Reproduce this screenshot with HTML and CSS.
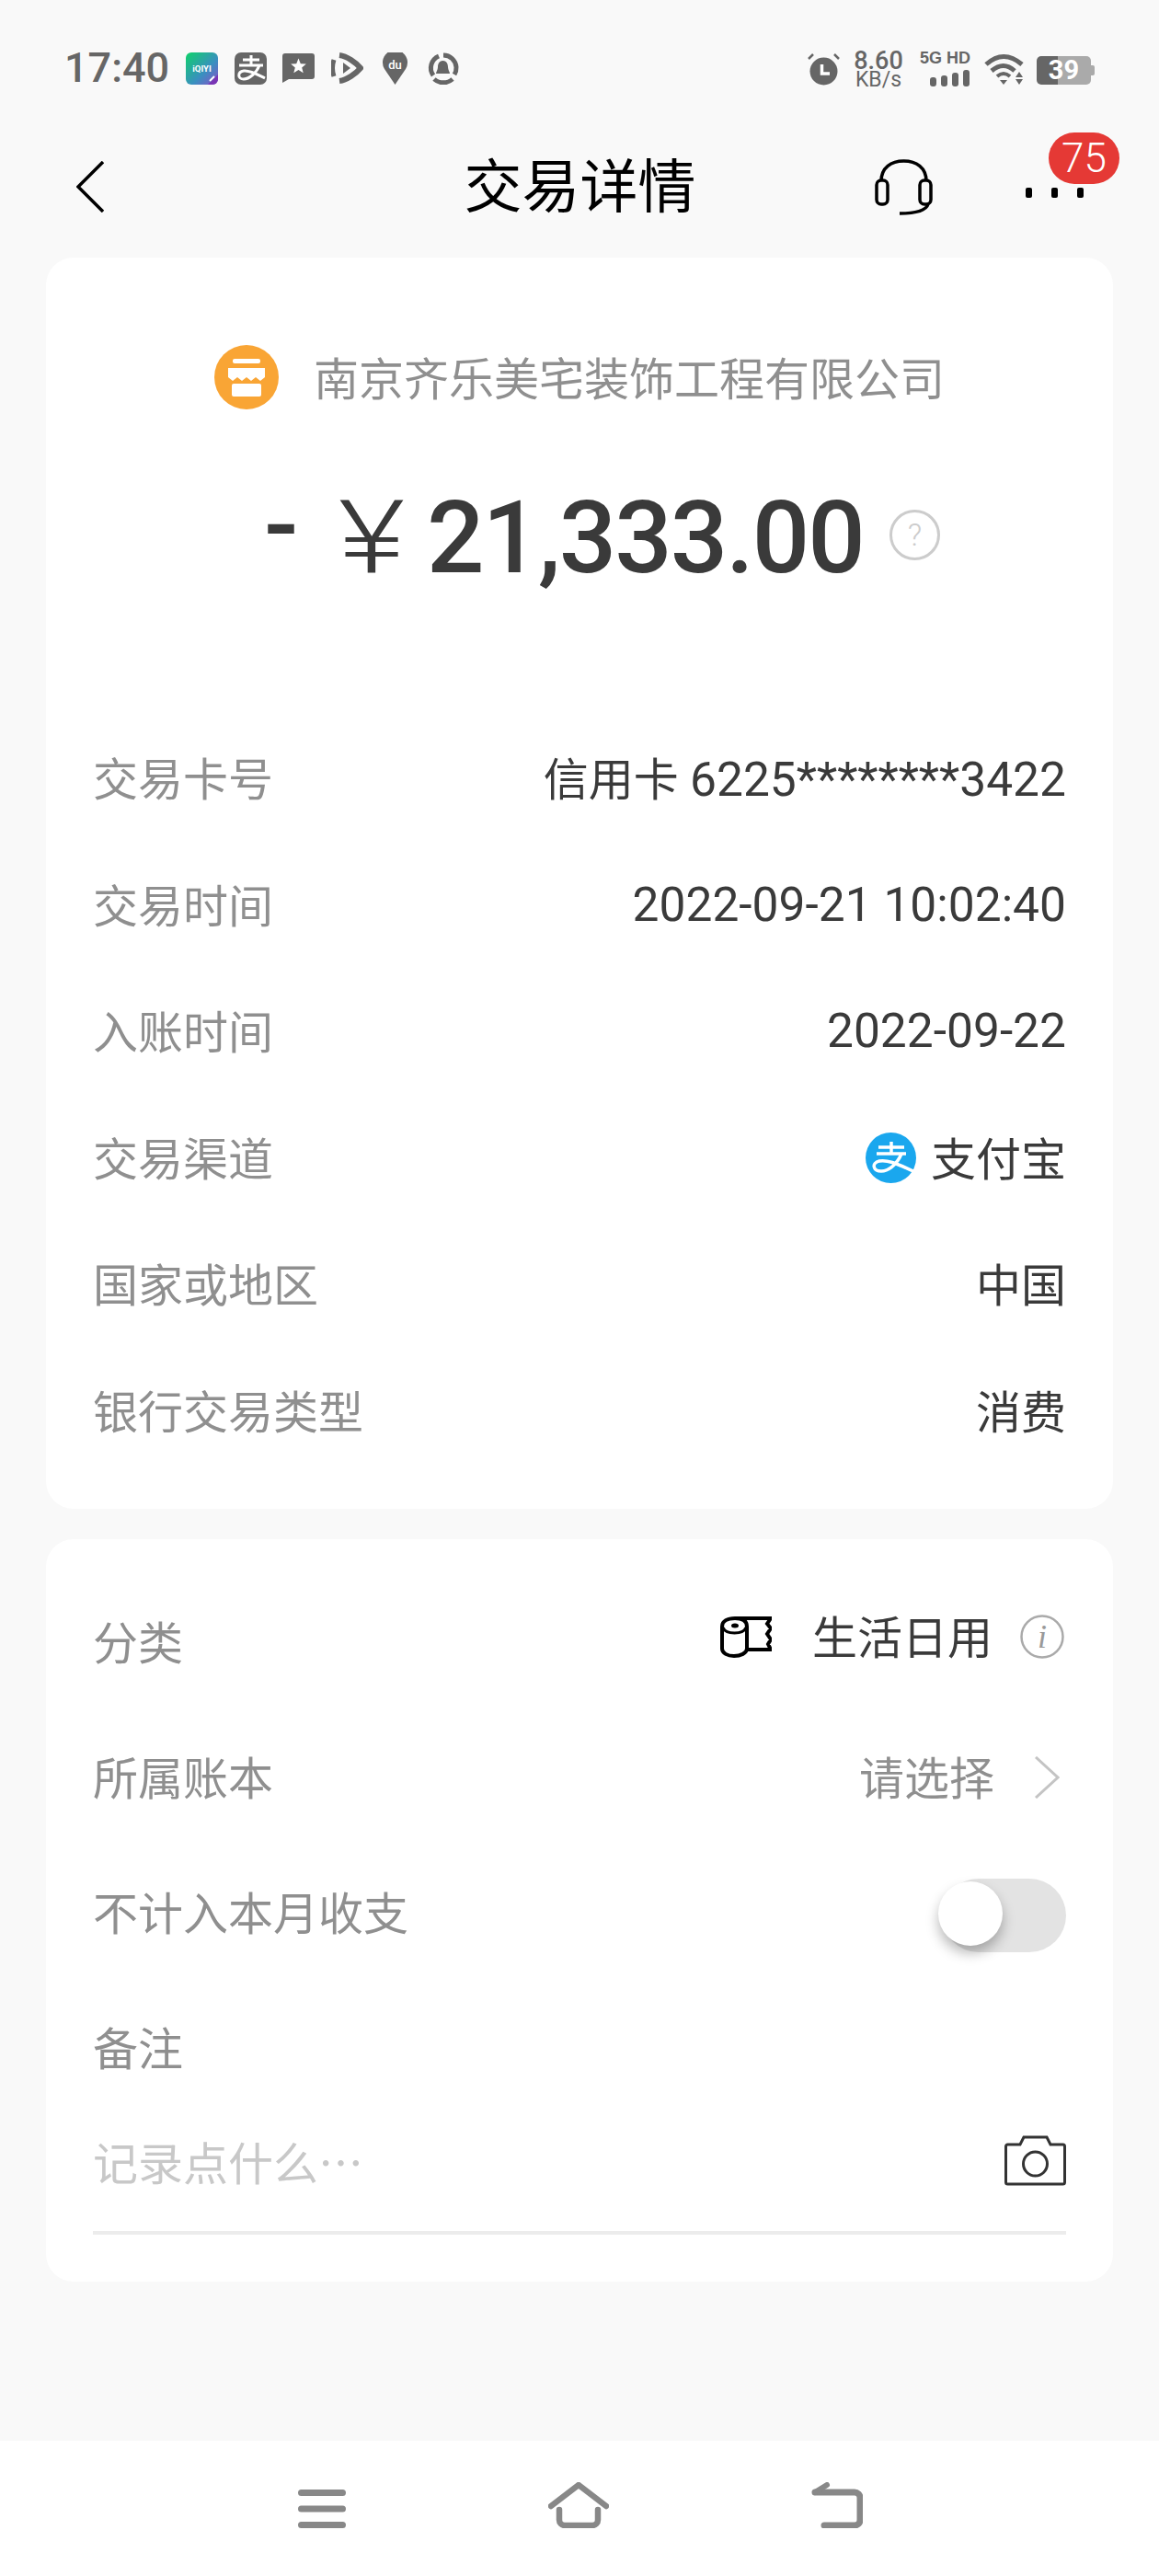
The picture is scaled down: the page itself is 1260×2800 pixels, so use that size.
FILE: index.html
```html
<!DOCTYPE html>
<html lang="zh-CN">
<head>
    <meta charset="UTF-8">
    <meta name="viewport" content="width=device-width, initial-scale=1.0">
    <title>交易详情</title>
    <link rel="stylesheet" href="styles.css">
</head>
<body>
    <!-- Status bar -->
    <div class="status-bar">
        <div class="status-left">
            <span class="clock">17:40</span>
            <svg class="status-icon" viewBox="0 0 35 35">
                <defs>
                    <linearGradient id="iqiyiFill" x1="0" y1="0" x2="1" y2="1">
                        <stop offset="0" stop-color="#0fd26a"/>
                        <stop offset="0.6" stop-color="#3a8fc0"/>
                        <stop offset="1" stop-color="#8a4fc8"/>
                    </linearGradient>
                </defs>
                <rect width="35" height="35" rx="6" fill="url(#iqiyiFill)"/>
                <text x="17.5" y="21" text-anchor="middle" class="iqiyi-text">iQIYI</text>
                <path d="M24 35 L35 24 V29 a6 6 0 0 1 -6 6z" fill="#7a35b5"/>
                <path d="M26 31 L31 26" stroke="#fff" stroke-width="2"/>
            </svg>
            <svg class="status-icon" viewBox="0 0 35 35">
                <rect width="35" height="35" rx="7" fill="#666"/>
                <path d="M9 8 H27 M18 3 V14 M5 14 H31" stroke="#fff" stroke-width="3" fill="none"/>
                <path d="M27 14 C24 22 16 29 10 29 C3 29 3 21 10 20 C17 19 25 24 33 28" stroke="#fff" stroke-width="3" fill="none"/>
            </svg>
            <svg class="status-icon" viewBox="0 0 35 35">
                <path d="M3 1 H32 a3 3 0 0 1 3 3 V26 a3 3 0 0 1 -3 3 H7 L0 33 V4 a3 3 0 0 1 3 -3z" fill="#666"/>
                <polygon points="17.5,6.5 19.8,12.2 25.8,12.6 21.2,16.4 22.7,22.3 17.5,19 12.3,22.3 13.8,16.4 9.2,12.6 15.2,12.2" fill="#fff"/>
            </svg>
            <svg class="status-icon" viewBox="0 0 35 35">
                <path d="M9 3 C17 4 27 11 32 17 C27 23 17 30 9 31" stroke="#666" stroke-width="6" fill="none"/>
                <path d="M3 8 C1 14 1 20 3 26" stroke="#666" stroke-width="5" fill="none"/>
                <polygon points="13,11 21,17 13,23" fill="#666"/>
            </svg>
            <svg class="status-icon" viewBox="0 0 35 35">
                <path d="M17.5 35 L6 18 A13.5 13.5 0 1 1 29 18z" fill="#666"/>
                <text x="17.5" y="18" text-anchor="middle" class="du-text">du</text>
            </svg>
            <svg class="status-icon" viewBox="0 0 35 35">
                <path d="M7 25 A14 14 0 0 1 13 4" stroke="#666" stroke-width="5" fill="none"/>
                <path d="M18 3 A14 14 0 0 1 32 16 A14 14 0 0 1 30 24" stroke="#666" stroke-width="5" fill="none"/>
                <path d="M8 29 A15 15 0 0 0 28 29" stroke="#666" stroke-width="5" fill="none"/>
                <path d="M17.5 9 C13 9 12 13 12 16 C12 19 10 21 10 23 H25 C25 21 23 19 23 16 C23 13 22 9 17.5 9z" fill="#666"/>
            </svg>
        </div>
        <div class="status-right">
            <svg class="alarm" viewBox="0 0 35 35">
                <circle cx="17.5" cy="19.5" r="15" fill="#666"/>
                <path d="M15.5 12 V22 H24" stroke="#fff" stroke-width="3.5" fill="none"/>
                <path d="M1 6 L6 1 M29 1 L34 6" stroke="#666" stroke-width="2.5"/>
            </svg>
            <div class="speed"><span>8.60</span><span class="speed-unit">KB/s</span></div>
            <div class="network">
                <span class="network-label">5G HD</span>
                <div class="signal">
                    <i class="bar bar-1"></i><i class="bar bar-2"></i><i class="bar bar-3"></i><i class="bar bar-4"></i>
                </div>
            </div>
            <svg class="wifi" viewBox="0 0 43 34">
                <path d="M2 12 Q21 -5 41 12" stroke="#666" stroke-width="5" fill="none"/>
                <path d="M8 19 Q21 8 33 19" stroke="#666" stroke-width="5" fill="none"/>
                <path d="M14 25 Q21 19 28 25" stroke="#666" stroke-width="4" fill="none"/>
                <polygon points="17,29 25,29 21,34" fill="#666"/>
                <polygon points="38,20 42,26 34,26" fill="#666"/>
                <polygon points="34,28 42,28 38,34" fill="#666"/>
            </svg>
            <div class="battery">39</div>
        </div>
    </div>

    <!-- Title bar -->
    <header class="top-bar">
        <svg class="back-icon" viewBox="0 0 30 56">
            <path d="M29 1 L2 28 L29 55" stroke="#000" stroke-width="3.5" fill="none"/>
        </svg>
        <h1 class="page-title">交易详情</h1>
        <div class="top-actions">
            <svg class="headset" viewBox="0 0 63 61">
                <path d="M7 24 C7 9 18 2 31.500 2 C45 2 56 9 56 24" stroke="#000" stroke-width="3.500" fill="none"/>
                <rect x="2" y="23" width="12" height="26" rx="5" stroke="#000" stroke-width="3.500" fill="none"/>
                <rect x="49" y="23" width="12" height="26" rx="5" stroke="#000" stroke-width="3.500" fill="none"/>
                <path d="M58 49 C56 55 48 59 27 59" stroke="#000" stroke-width="3.500" fill="none"/>
            </svg>
            <div class="more">
                <i class="more-dot"></i><i class="more-dot"></i><i class="more-dot"></i>
                <span class="badge">75</span>
            </div>
        </div>
    </header>

    <main class="content">
        <!-- Transaction card -->
        <section class="card card-detail">
            <div class="merchant">
                <svg class="merchant-icon" viewBox="0 0 70 70">
                    <circle cx="35" cy="35" r="35" fill="#f9a535"/>
                    <rect x="20" y="15" width="30" height="5" rx="2" fill="#fff"/>
                    <path d="M15 25 H55 V35 L50 39 L45 35 L40 39 L35 35 L30 39 L25 35 L20 39 L15 35z" fill="#fff"/>
                    <rect x="19" y="42" width="32" height="14" rx="2" fill="#fff"/>
                </svg>
                <span class="merchant-name lift">南京齐乐美宅装饰工程有限公司</span>
            </div>
            <div class="amount">
                <span class="amount-sign">-</span>
                <span class="amount-currency">¥</span>
                <span class="amount-value">21,333.00</span>
                <svg class="help-icon" viewBox="0 0 55 55">
                    <circle cx="27.500" cy="27.500" r="26" stroke="#ccc" stroke-width="3" fill="none"/>
                    <text x="27.500" y="39" text-anchor="middle" class="help-text">?</text>
                </svg>
            </div>
            <div class="row"><span class="label">交易卡号</span><span class="value lift">信用卡 <span class="num">6225********3422</span></span></div>
            <div class="row"><span class="label">交易时间</span><span class="value num">2022-09-21 10:02:40</span></div>
            <div class="row"><span class="label">入账时间</span><span class="value num">2022-09-22</span></div>
            <div class="row">
                <span class="label">交易渠道</span>
                <span class="value value-icon">
                    <svg class="alipay-icon" viewBox="0 0 55 55">
                        <circle cx="27.500" cy="27.500" r="27.500" fill="#1aa7ee"/>
                        <path d="M14 16 H42 M28 10 V23 M12 23 H44" stroke="#fff" stroke-width="3.500" fill="none"/>
                        <path d="M39 23 C35 33 26 42 17 42 C8 42 6 33 15 31 C25 29 38 36 52 42" stroke="#fff" stroke-width="3.500" fill="none"/>
                    </svg>
                    <span class="lift">支付宝</span>
                </span>
            </div>
            <div class="row"><span class="label">国家或地区</span><span class="value lift">中国</span></div>
            <div class="row"><span class="label">银行交易类型</span><span class="value lift">消费</span></div>
        </section>

        <!-- Category and note card -->
        <section class="card card-extra">
            <div class="row row-tall">
                <span class="label">分类</span>
                <span class="value value-icon value-category">
                    <svg class="roll-icon" viewBox="0 0 56 46">
                        <path d="M16 3 C8 3 2 6 2 12 V36 C2 41 8 44 15 44 C22 44 29 41 29 36 V12 C29 6 24 3 16 3z M29 37 H55 L52 31 L55 26 L51 20 L55 14 L51 9 L55 3 H16" stroke="#000" stroke-width="4" fill="none"/>
                        <path d="M3 13 C6 21 25 21 28 13" stroke="#000" stroke-width="3" fill="none"/>
                        <ellipse cx="16" cy="11" rx="4" ry="2.500" fill="#000"/>
                    </svg>
                    <span class="category-name lift">生活日用</span>
                    <svg class="info-icon" viewBox="0 0 48 48">
                        <circle cx="24" cy="24" r="22.500" stroke="#aaa" stroke-width="2.500" fill="none"/>
                        <text x="24" y="36" text-anchor="middle" class="info-text">i</text>
                    </svg>
                </span>
            </div>
            <div class="row row-tall">
                <span class="label">所属账本</span>
                <span class="value value-icon value-muted">
                    <span class="lift">请选择</span>
                    <svg class="chevron" viewBox="0 0 28 46">
                        <path d="M2 1 L26 23 L2 45" stroke="#c4c4c4" stroke-width="3" fill="none"/>
                    </svg>
                </span>
            </div>
            <div class="row row-tall">
                <span class="label">不计入本月收支</span>
                <span class="toggle"><i class="toggle-knob"></i></span>
            </div>
            <div class="row row-tall"><span class="label">备注</span></div>
            <div class="note">
                <span class="note-placeholder">记录点什么…</span>
                <svg class="camera-icon" viewBox="0 0 67 55">
                    <path d="M3.500 10 H17 L21 2 H46 L50 10 H63.500 a2 2 0 0 1 2 2 V51 a2 2 0 0 1 -2 2 H3.500 a2 2 0 0 1 -2 -2 V12 a2 2 0 0 1 2 -2z" stroke="#333" stroke-width="3" fill="none"/>
                    <circle cx="33.500" cy="31" r="13" stroke="#333" stroke-width="3" fill="none"/>
                </svg>
            </div>
        </section>
    </main>

    <!-- System navigation -->
    <nav class="nav-bar">
        <svg class="nav-icon" viewBox="0 0 52 42">
            <path d="M3.500 3.500 H48.500 M3.500 21 H48.500 M3.500 38.500 H48.500" stroke="#888" stroke-width="7" stroke-linecap="round"/>
        </svg>
        <svg class="nav-icon nav-home" viewBox="0 0 66 50">
            <path d="M3 26 L33 3 L63 26" stroke="#888" stroke-width="6.500" stroke-linecap="round" stroke-linejoin="round" fill="none"/>
            <path d="M12 30 V41 a6 6 0 0 0 6 6 H48 a6 6 0 0 0 6 -6 V30" stroke="#888" stroke-width="6.500" stroke-linecap="round" fill="none"/>
        </svg>
        <svg class="nav-icon nav-back" viewBox="0 0 56 50">
            <path d="M4 11 H47 a6 6 0 0 1 6 6 V41 a6 6 0 0 1 -6 6 H14" stroke="#888" stroke-width="7" stroke-linecap="round" fill="none"/>
            <path d="M4 11 L17 3" stroke="#888" stroke-width="6" stroke-linecap="round"/>
        </svg>
    </nav>
</body>
</html>
```

FILE: styles.css
```css
/* Page */
* {
    box-sizing: border-box;
}

body {
    margin: 0;
    width: 1260px;
    height: 2800px;
    display: flex;
    flex-direction: column;
    overflow: hidden;
    background-color: #f9f9f9;
    font-family: Roboto, "Noto Sans CJK SC", sans-serif;
    color: #3a3a3a;
}

svg {
    display: block;
    flex: none;
}

.lift {
    margin-bottom: 4px;
}

/* Status bar */
.status-bar {
    height: 140px;
    padding: 56px 70px 0 70px;
    display: flex;
    justify-content: space-between;
    align-items: flex-start;
    color: #666;
}

.status-left {
    display: flex;
    align-items: center;
    gap: 17.4px;
}

.clock {
    width: 113px;
    margin-right: 2px;
    font-size: 45px;
    line-height: 36px;
    font-weight: 500;
}

.status-icon {
    width: 35px;
    height: 35px;
}

.iqiyi-text {
    font-size: 9.5px;
    font-weight: 700;
    fill: #fff;
}

.du-text {
    font-size: 13px;
    font-weight: 500;
    fill: #fff;
}

.status-right {
    display: flex;
    align-items: flex-start;
    gap: 14.5px;
}

.alarm {
    width: 35px;
    height: 35px;
    margin-top: 2px;
}

.speed {
    width: 55px;
    display: flex;
    flex-direction: column;
    align-items: center;
    font-size: 27px;
    line-height: 21px;
    font-weight: 500;
}

.speed-unit {
    font-size: 23px;
    font-weight: 400;
    line-height: 20px;
}

.network {
    width: 58px;
    display: flex;
    flex-direction: column;
    align-items: flex-end;
    gap: 5px;
}

.network-label {
    font-family: "Liberation Sans Narrow", "Liberation Sans", sans-serif;
    font-size: 18px;
    line-height: 15px;
    font-weight: 700;
    white-space: nowrap;
}

.signal {
    display: flex;
    align-items: flex-end;
    gap: 5px;
    height: 18px;
    margin-right: 1px;
}

.bar {
    width: 7px;
    background-color: #666;
    border-radius: 3px;
}

.bar-1 { height: 10px; }
.bar-2 { height: 12px; }
.bar-3 { height: 15px; }
.bar-4 { height: 18px; }

.wifi {
    width: 43px;
    height: 34px;
    margin-top: 2px;
}

.battery {
    position: relative;
    width: 59px;
    height: 31px;
    margin: 5px 4px 0 0;
    border-radius: 5px;
    background: linear-gradient(90deg, #666 39%, #aaa 39%);
    color: #fff;
    font-size: 29px;
    line-height: 31px;
    font-weight: 700;
    text-align: center;
}

.battery::after {
    content: "";
    position: absolute;
    top: 10px;
    right: -4px;
    width: 4px;
    height: 11px;
    border-radius: 0 2px 2px 0;
    background-color: #aaa;
}

/* Title bar */
.top-bar {
    height: 126px;
    padding: 0 82px 0 83px;
    display: grid;
    grid-template-columns: 1fr auto 1fr;
    align-items: center;
}

.back-icon {
    width: 30px;
    height: 56px;
}

.page-title {
    margin: 2px 0 0;
    font-size: 63px;
    line-height: 70px;
    font-weight: 400;
    color: #000;
}

.top-actions {
    display: flex;
    justify-content: flex-end;
    align-items: center;
    gap: 101px;
}

.headset {
    width: 63px;
    height: 61px;
}

.more {
    position: relative;
    width: 63px;
    display: flex;
    justify-content: space-between;
    margin-top: 12px;
}

.more-dot {
    width: 7px;
    height: 11px;
    border-radius: 2px;
    background-color: #000;
}

.badge {
    position: absolute;
    top: -60px;
    left: 25px;
    width: 77px;
    height: 56px;
    border-radius: 28px;
    background-color: #e53935;
    color: #fff;
    font-size: 44px;
    font-weight: 300;
    line-height: 56px;
    text-align: center;
}

/* Cards */
.content {
    padding: 14px 50px 0;
    display: flex;
    flex-direction: column;
    gap: 33px;
}

.card {
    background-color: #fff;
    border-radius: 30px;
    padding: 0 51px;
}

.card-detail {
    height: 1360px;
    padding-top: 95px;
}

.card-extra {
    height: 807px;
    padding-top: 38px;
}

.merchant {
    display: flex;
    align-items: center;
    justify-content: center;
    gap: 38px;
    height: 70px;
}

.merchant-icon {
    width: 70px;
    height: 70px;
}

.merchant-name {
    font-size: 49px;
    color: #8f8f8f;
    white-space: nowrap;
}

.amount {
    height: 332px;
    padding: 70px 0 0 186px;
    display: flex;
    align-items: flex-start;
    font-weight: 500;
    color: #3a3a3a;
    line-height: 140px;
}

.amount-sign {
    width: 81px;
    font-size: 110px;
    position: relative;
    top: -14px;
}

.amount-currency {
    display: inline-block;
    width: 96px;
    font-size: 112px;
    font-weight: 300;
    transform: scaleX(1.25);
    transform-origin: left center;
}

.amount-value {
    font-size: 110px;
    letter-spacing: -2px;
    width: 503px;
}

.help-icon {
    width: 55px;
    height: 55px;
    margin-top: 39px;
}

.help-text {
    font-size: 34px;
    font-weight: 300;
    fill: #ccc;
}

/* Rows */
.row {
    height: 137.5px;
    display: flex;
    justify-content: space-between;
    align-items: center;
    font-size: 49px;
}

.row-tall {
    height: 147px;
}

.label {
    color: #8f8f8f;
    white-space: nowrap;
    margin-bottom: 4px;
}

.value {
    color: #3a3a3a;
    white-space: nowrap;
}

.num {
    font-size: 51.5px;
}

.value-icon {
    display: flex;
    align-items: center;
    gap: 16px;
}

.value-muted {
    color: #8f8f8f;
    gap: 43px;
}

.value-category {
    margin-bottom: 12px;
}

.category-name {
    margin: 0 14px 4px 28px;
}

.alipay-icon {
    width: 55px;
    height: 55px;
}

.roll-icon {
    width: 56px;
    height: 46px;
}

.info-icon {
    width: 48px;
    height: 48px;
    margin-right: 2px;
}

.info-text {
    font-family: "Liberation Serif", serif;
    font-size: 36px;
    font-style: italic;
    fill: #999;
}

.chevron {
    width: 28px;
    height: 46px;
    margin-right: 7px;
}

/* Toggle */
.toggle {
    position: relative;
    width: 135px;
    height: 80px;
    margin-top: 6px;
    border-radius: 40px;
    background-color: #e3e3e3;
}

.toggle-knob {
    position: absolute;
    top: 3px;
    left: -4px;
    width: 70px;
    height: 70px;
    border-radius: 50%;
    background-color: #fff;
    box-shadow: 0 8px 14px rgba(0, 0, 0, 0.28);
}

/* Note */
.note {
    height: 130px;
    padding-bottom: 28px;
    display: flex;
    justify-content: space-between;
    align-items: center;
    border-bottom: 4px solid #ececec;
}

.note-placeholder {
    font-family: "Noto Sans CJK SC", sans-serif;
    font-size: 49px;
    color: #c8c8c8;
}

.camera-icon {
    width: 67px;
    height: 55px;
}

/* Bottom navigation */
.nav-bar {
    margin-top: auto;
    height: 147px;
    padding: 45px 322px 0 324px;
    display: flex;
    justify-content: space-between;
    align-items: flex-start;
    background-color: #fff;
}

.nav-icon {
    width: 52px;
    height: 42px;
    margin-top: 8px;
}

.nav-home {
    width: 66px;
    height: 50px;
    margin-top: 0;
}

.nav-back {
    width: 56px;
    height: 50px;
    margin-top: 0;
}
```
